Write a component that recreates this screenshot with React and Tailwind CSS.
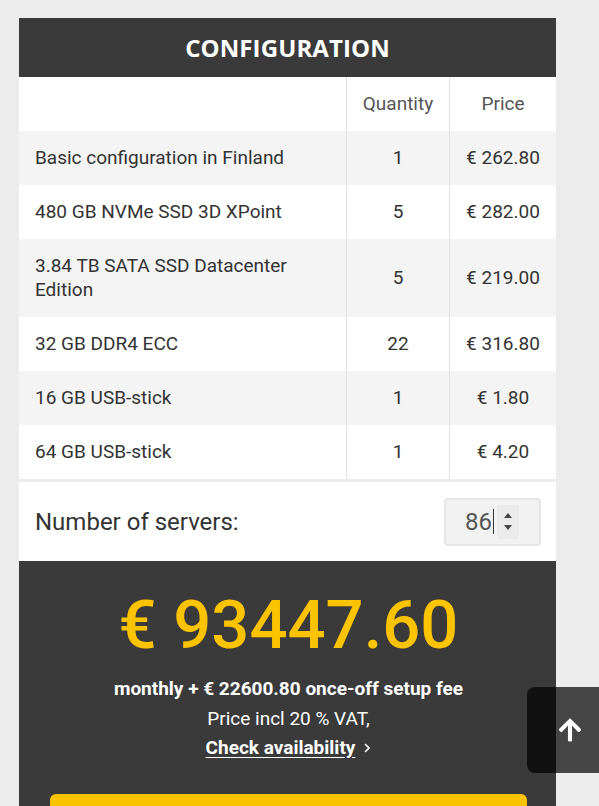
import React from "react";
import { FaArrowUp } from "react-icons/fa";

const rows = [
  { name: "Basic configuration in Finland", qty: 1, price: "€ 262.80" },
  { name: "480 GB NVMe SSD 3D XPoint", qty: 5, price: "€ 282.00" },
  { name: "3.84 TB SATA SSD Datacenter Edition", qty: 5, price: "€ 219.00", tall: true },
  { name: "32 GB DDR4 ECC", qty: 22, price: "€ 316.80" },
  { name: "16 GB USB-stick", qty: 1, price: "€ 1.80" },
  { name: "64 GB USB-stick", qty: 1, price: "€ 4.20" },
];

export default function App() {
  return (
    <div className="min-h-screen bg-[#ececec] pt-[18px] pl-[19px] font-['Roboto',sans-serif] overflow-hidden">
      <div className="w-[537px] bg-white">
        {/* Header */}
        <div className="h-[59px] bg-[#3a3a3a] flex items-center justify-center">
          <h2 className="text-white text-[24px] font-bold font-['Open_Sans',sans-serif] tracking-[0.1px]">
            CONFIGURATION
          </h2>
        </div>

        {/* Table */}
        <div className="grid grid-cols-[327px_103px_107px] text-[19px] text-[#333]">
          <div className="h-[54px]" />
          <div className="h-[54px] border-l border-[#e3e3e3] flex items-center justify-center text-[#555]">
            Quantity
          </div>
          <div className="h-[54px] border-l border-[#e3e3e3] flex items-center justify-center text-[#555]">
            Price
          </div>
          {rows.map((r, i) => {
            const bg = i % 2 === 0 ? "bg-[#f4f4f4]" : "bg-white";
            const h = r.tall ? "h-[78px]" : "h-[54px]";
            return (
              <React.Fragment key={i}>
                <div className={`${bg} ${h} flex items-center pl-4 pr-6 leading-[24px]`}>{r.name}</div>
                <div className={`${bg} ${h} border-l border-[#e3e3e3] flex items-center justify-center`}>{r.qty}</div>
                <div className={`${bg} ${h} border-l border-[#e3e3e3] flex items-center justify-center`}>{r.price}</div>
              </React.Fragment>
            );
          })}
        </div>

        {/* Number of servers */}
        <div className="border-t-[3px] border-[#ececec] h-[82px] flex items-center justify-between pl-4 pr-[15px]">
          <span className="text-[24px] text-[#333]">Number of servers:</span>
          <div className="w-[97px] h-[48px] bg-[#f2f2f2] border-2 border-[#e6e6e6] rounded flex items-center justify-end pr-[20px]">
            <span className="text-[24px] text-[#555] leading-none">86</span>
            <span className="w-px h-[25px] bg-[#333] ml-[1px]" />
            <div className="ml-[3px] w-[22px] h-[34px] bg-[#ebebeb] flex flex-col items-center justify-center gap-[7px]">
              <span className="w-0 h-0 border-l-[4px] border-r-[4px] border-b-[5px] border-l-transparent border-r-transparent border-b-[#444]" />
              <span className="w-0 h-0 border-l-[4px] border-r-[4px] border-t-[5px] border-l-transparent border-r-transparent border-t-[#444]" />
            </div>
          </div>
        </div>

        {/* Total */}
        <div className="bg-[#3a3a3a] pt-[24px] pb-[40px] pl-[31px] pr-[29px] flex flex-col items-center">
          <div className="text-[#fcc400] text-[67px] font-medium leading-[80px]">€ 93447.60</div>
          <div className="mt-[10px] text-white text-[19px] font-bold leading-[28px]">
            monthly + € 22600.80 once-off setup fee
          </div>
          <div className="text-white text-[19px] leading-[30px] mt-[1px]">Price incl 20 % VAT,</div>
          <a className="text-white text-[19px] font-bold leading-[28px] flex items-center gap-[8px]">
            <span className="underline underline-offset-[3px]">Check availability</span>
            <svg width="8" height="12" viewBox="0 0 8 12" fill="none" stroke="white" strokeWidth="1.6">
              <path d="M2 2l4 4-4 4" />
            </svg>
          </a>
          <button className="mt-[32px] w-full h-[56px] bg-[#fcc400] rounded-md" />
        </div>
      </div>

      {/* Scroll to top */}
      <button className="fixed right-0 top-[687px] w-[72px] h-[86px] bg-black/70 rounded-l-lg flex items-center justify-start pl-[30px]">
        <FaArrowUp className="text-white w-[26px] h-[26px]" />
      </button>
    </div>
  );
}
